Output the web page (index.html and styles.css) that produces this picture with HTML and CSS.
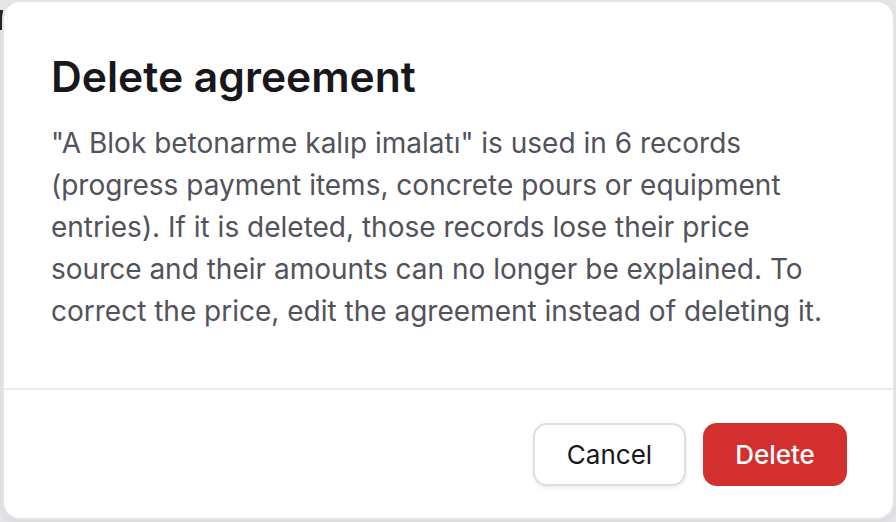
FILE: index.html
```html
<!DOCTYPE html>
<html lang="en">
  <head>
    <meta charset="UTF-8" />
    <meta name="viewport" content="width=device-width, initial-scale=1.0" />
    <title>Delete agreement</title>
    <link rel="stylesheet" href="styles.css">
  </head>
  <body>
    <div class="backdrop-edge"></div>
    <div class="dialog" role="alertdialog" aria-labelledby="dialog-title">
      <div class="dialog-body">
        <h2 id="dialog-title">Delete agreement</h2>
        <p class="dialog-text">"A Blok betonarme kalıp imalatı" is used in 6 records (progress payment items, concrete pours or equipment entries). If it is deleted, those records lose their price source and their amounts can no longer be explained. To correct the price, edit the agreement instead of deleting it.</p>
      </div>
      <div class="dialog-footer">
        <button class="btn btn-cancel">Cancel</button>
        <button class="btn btn-delete">Delete</button>
      </div>
    </div>
  </body>
</html>
```

FILE: styles.css
```css
* {
  margin: 0;
  padding: 0;
  box-sizing: border-box;
  font-family: 'Inter', 'Noto Sans', sans-serif;
}

body {
  background: #e6e6ea;
  width: 896px;
  height: 522px;
  overflow: hidden;
  position: relative;
}

/* sliver of the page behind the overlay */
.backdrop-edge {
  position: absolute;
  left: 0;
  top: 10px;
  width: 3px;
  height: 20px;
  background: #27272a;
}

.dialog {
  position: relative;
  margin-left: 2px;
  width: 893px;
  height: 520px;
  background: #fff;
  border: 2px solid #e4e4e7;
  border-radius: 18px;
  box-shadow: 0 4px 10px rgba(0, 0, 0, 0.06);
  display: flex;
  flex-direction: column;
}

.dialog-body {
  padding: 49px 50px 0 47px;
  flex: 1;
}

#dialog-title {
  font-size: 42.6px;
  font-weight: 600;
  line-height: 1.2;
  color: #18181b;
  margin-bottom: 20px;
}

.dialog-text {
  font-size: 28px;
  line-height: 42px;
  color: #52525b;
}

.dialog-footer {
  border-top: 2px solid #ececef;
  padding: 33px 46px 32px;
  display: flex;
  justify-content: flex-end;
  gap: 17px;
}

.btn {
  height: 63px;
  font-size: 26px;
  border-radius: 14px;
  cursor: pointer;
}

.btn-cancel {
  width: 153px;
  background: #fff;
  color: #18181b;
  font-weight: 400;
  border: 2px solid #dedee3;
  box-shadow: 0 2px 4px rgba(0, 0, 0, 0.08);
}

.btn-delete {
  width: 144px;
  background: #d32f2f;
  color: #fff;
  font-weight: 500;
  border: none;
}
```
